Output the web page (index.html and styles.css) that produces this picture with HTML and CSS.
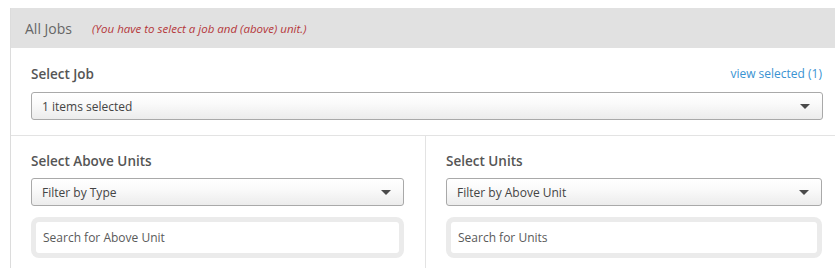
FILE: index.html
```html
<!DOCTYPE html>
<html>
<head>
<meta charset="utf-8">
<link rel="stylesheet" href="styles.css">
</head>
<body>
<div class="panel">
  <div class="panel-head">
    <span class="title">All Jobs</span>
    <span class="hint">(You have to select a job and (above) unit.)</span>
  </div>
  <div class="section job">
    <div class="row-head">
      <span class="label">Select Job</span>
      <a class="link">view selected (1)</a>
    </div>
    <div class="select"><span>1 items selected</span><i class="caret"></i></div>
  </div>
  <div class="cols">
    <div class="col left">
      <div class="label">Select Above Units</div>
      <div class="select"><span>Filter by Type</span><i class="caret"></i></div>
      <div class="search"><div class="input">Search for Above Unit</div></div>
    </div>
    <div class="col">
      <div class="label">Select Units</div>
      <div class="select"><span>Filter by Above Unit</span><i class="caret"></i></div>
      <div class="search"><div class="input">Search for Units</div></div>
    </div>
  </div>
</div>
</body>
</html>
```
FILE: styles.css
```css
html { overflow: hidden; }
body {
  margin: 8px 0 0 10px;
  font-family: "Open Sans", "Liberation Sans", sans-serif;
  color: #555;
  background: #fff;
}
.panel {
  margin-right: -8px;
  border-left: 1px solid #dcdcdc;
}
.panel-head {
  height: 40px;
  background: #e1e1e1;
  display: flex;
  align-items: center;
  padding-left: 14px;
}
.title {
  font-size: 14px;
  color: #666;
}
.hint {
  margin-left: 20px;
  font-size: 11.5px;
  font-style: italic;
  color: #b5373a;
}
.section.job {
  padding: 16px 20px 15px 20px;
  border-bottom: 1px solid #e3e3e3;
}
.row-head {
  display: flex;
  justify-content: space-between;
  align-items: baseline;
}
.label {
  font-size: 13.5px;
  font-weight: 600;
  color: #555;
  line-height: 20px;
}
.link {
  font-size: 12px;
  color: #3a93d2;
  margin-right: 1px;
  position: relative;
  top: -1px;
}
.select {
  margin-top: 8px;
  height: 26px;
  border: 1px solid #a9a9a9;
  border-radius: 3px;
  background: linear-gradient(#fff 0%, #fafafa 40%, #ececec 100%);
  display: flex;
  align-items: center;
  justify-content: space-between;
  padding: 0 10px 0 10px;
  font-size: 12px;
  color: #444;
}
.caret {
  width: 0;
  height: 0;
  border-left: 5px solid transparent;
  border-right: 5px solid transparent;
  border-top: 5px solid #4a4a4a;
  margin-right: 2px;
}
.cols {
  display: grid;
  grid-template-columns: 415px 1fr;
}
.col {
  padding: 15px 21px 10px 20px;
}
.col.left {
  border-right: 1px solid #e3e3e3;
}
.col .select { margin-top: 7px; }
.search {
  margin-top: 11px;
  background: #ebebeb;
  border-radius: 8px;
  padding: 5px;
}
.input {
  background: #fff;
  border-radius: 3px;
  height: 31px;
  display: flex;
  align-items: center;
  padding-left: 7px;
  font-size: 12px;
  color: #5a5a5a;
}
```
